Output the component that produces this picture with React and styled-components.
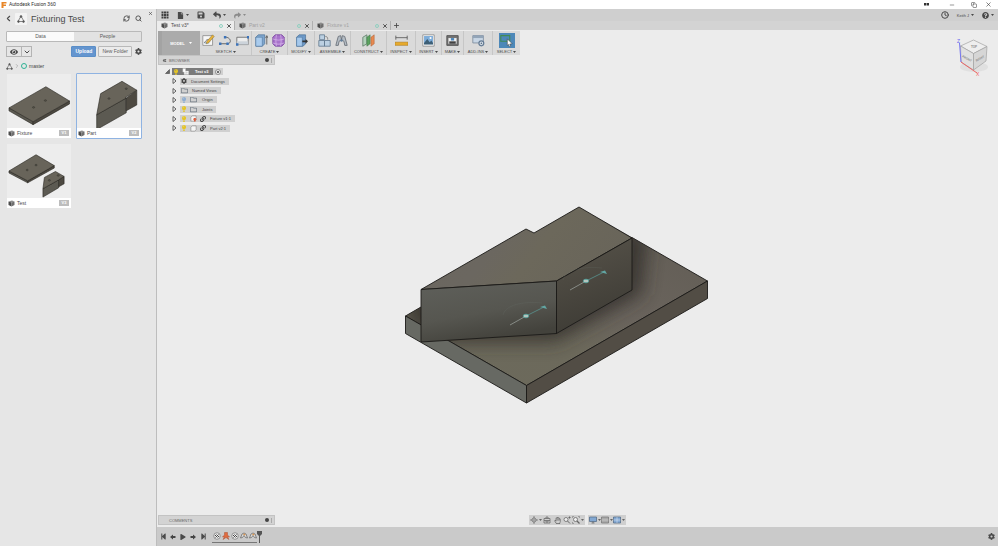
import React, { useState } from 'react';
import styled, { createGlobalStyle } from 'styled-components';
import { FaSave, FaFile, FaReply, FaShare, FaQuestionCircle, FaCog, FaEye, FaLink, FaLightbulb, FaRegFolder, FaRegHandPaper, FaStepBackward, FaStepForward, FaPlay } from 'react-icons/fa';
import { ChevronLeft, ChevronDown, ChevronRight, RefreshCw, Search, X, Plus, Minus, Copy, Clock, ChevronsLeft } from 'lucide-react';

const GlobalStyle = createGlobalStyle`
    *
    {
        box-sizing: border-box;
    }
    body
    {
        margin: 0;
        overflow: hidden;
        color: #4a4a4a;
        font-family: "Liberation Sans", Arial, sans-serif;
        font-size: 5px;
        line-height: 7px;
    }
    button
    {
        display: flex;
        align-items: center;
        justify-content: center;
        margin: 0;
        padding: 0;
        border: 0;
        background: none;
        color: inherit;
        font: inherit;
        white-space: nowrap;
    }
    svg
    {
        display: block;
        flex-shrink: 0;
    }
`;

const Window = styled.div`
    display: flex;
    flex-direction: column;
    height: 100vh;
    background: #ececec;
`;

const TitleBar = styled.header`
    display: flex;
    align-items: center;
    height: 9px;
    padding: 0 6px 0 1px;
    gap: 2px;
    background: #fff;
    color: #333;
    font-family: Roboto, sans-serif;
`;

const TitleText = styled.div`
    flex-grow: 1;
`;

const WindowButton = styled.button`
    width: ${({ $wide }) => $wide ? 24 : 16}px;
    height: 8px;
    &:last-child
    {
        width: 8px;
    }
`;

const Body = styled.div`
    display: flex;
    flex-grow: 1;
    min-height: 0;
`;

/* data panel */

const Panel = styled.aside`
    position: relative;
    flex-shrink: 0;
    width: 157px;
    padding: 3px 14px 0 6px;
    background: #e6e6e6;
    border-right: 1px solid #bdbdbd;
`;

const PanelClose = styled.button`
    position: absolute;
    top: 2px;
    right: 3px;
    width: 5px;
    height: 5px;
`;

const PanelHeader = styled.div`
    display: flex;
    align-items: center;
    height: 13px;
    margin-right: -2px;
`;

const ProjectLogo = styled.div`
    display: flex;
    align-items: center;
    justify-content: center;
    width: 12px;
    height: 12px;
    margin: 0 4px;
    background: #f3f3f3;
    border-radius: 1px;
`;

const ProjectName = styled.h1`
    flex-grow: 1;
    margin: 0;
    font-size: 9px;
    font-weight: normal;
    line-height: 12px;
`;

const HeaderButton = styled.button`
    width: ${({ $wide }) => $wide ? 12 : 8}px;
    height: 10px;
    &:first-child
    {
        width: 5px;
    }
`;

const Switcher = styled.div`
    display: flex;
    height: 11px;
    margin-top: 6px;
    border: 1px solid #b9b9b9;
    border-radius: 1px;
`;

const SwitchButton = styled.button`
    flex: 1;
    background: ${({ $active }) => $active ? `#fafafa` : `#e2e2e2`};
    color: #5c5c5c;
`;

const Actions = styled.div`
    display: flex;
    align-items: center;
    height: 11px;
    margin-top: 4px;
`;

const ViewButton = styled.button`
    width: ${({ $small }) => $small ? 11 : 16}px;
    height: 11px;
    border: 1px solid #b4b4b4;
    margin-right: ${({ $small }) => $small ? `auto` : `-1px`};
`;

const ActionButton = styled.button`
    height: 11px;
    padding: 0 3px;
    margin-right: 2px;
    border: 1px solid ${({ $primary }) => $primary ? `#5a8ec8` : `#b9b9b9`};
    border-radius: 1px;
    background: ${({ $primary }) => $primary ? `#6495cf` : `#ebebeb`};
    color: ${({ $primary }) => $primary ? `#fff` : `#5c5c5c`};
    font-weight: ${({ $primary }) => $primary ? `bold` : `normal`};
`;

const Crumbs = styled.nav`
    display: flex;
    align-items: center;
    gap: 1px;
    height: 8px;
    margin-top: 5px;
    margin-bottom: 3px;
    a
    {
        color: #444;
        text-decoration: none;
    }
`;

const Ring = styled.span`
    width: 6px;
    height: 6px;
    margin-right: 1px;
    border: 1px solid #2fb295;
    border-radius: 50%;
`;

const Cards = styled.div`
    display: grid;
    grid-template-columns: 1fr 1fr;
    gap: 4px;
`;

const Card = styled.div`
    border: 1px solid ${({ $selected }) => $selected ? `#8fb3e2` : `transparent`};
    border-radius: 1px;
    background: #ededed;
    background-clip: padding-box;
`;

const CardImage = styled.svg`
    width: 100%;
    height: 54px;
`;

const CardFooter = styled.div`
    display: flex;
    align-items: center;
    height: 10px;
    padding: 0 2px 0 1px;
    gap: 2px;
    background: #fff;
`;

const CardName = styled.div`
    flex-grow: 1;
`;

const Version = styled.span`
    width: 10px;
    height: 6px;
    background: #bdbdbd;
    color: #fff;
    font-size: 4px;
    font-weight: bold;
    line-height: 6px;
    text-align: center;
`;

/* work space */

const Workspace = styled.main`
    display: flex;
    flex-direction: column;
    flex-grow: 1;
    min-width: 0;
`;

const QuickBar = styled.div`
    display: flex;
    align-items: center;
    height: 12px;
    padding: 0 4px;
    gap: 8px;
    background: #cfcfcf;
    font-size: 4px;
`;

const QuickButton = styled.button`
    gap: 2px;
    height: 10px;
    min-width: 8px;
    opacity: ${({ $dim }) => $dim ? .5 : 1};
`;

const Spacer = styled.div`
    flex-grow: 1;
`;

const DocTabs = styled.div`
    display: flex;
    height: 9px;
    background: #d3d3d3;
`;

const DocTab = styled.div`
    display: flex;
    align-items: center;
    width: 78px;
    padding: 0 2px 0 4px;
    border-right: 1px solid #b0b0b0;
    background: ${({ $active }) => $active ? `#ececec` : `#d3d3d3`};
    color: ${({ $active }) => $active ? `#4a4a4a` : `#a2a2a2`};
`;

const DocName = styled.button`
    flex-grow: 1;
    justify-content: flex-start;
    gap: 3px;
`;

const Dot = styled.span`
    width: 4px;
    height: 4px;
    margin-right: 3px;
    border: 1px solid #8fd0c0;
    border-radius: 50%;
`;

const AddTab = styled.button`
    width: 10px;
`;

const Canvas = styled.section`
    position: relative;
    display: flex;
    flex-direction: column;
    flex-grow: 1;
    min-height: 0;
    padding: 1px 1px 2px;
    background: #ececec;
    > *
    {
        z-index: 1;
    }
`;

const ModelView = styled.svg`
    position: absolute;
    inset: 0;
    width: 100%;
    height: 100%;
    z-index: 0;
`;

const ViewCube = styled.svg`
    position: absolute;
    top: 4px;
    right: 4px;
    width: 44px;
    height: 46px;
`;

const Toolbar = styled.div`
    display: flex;
    align-self: flex-start;
    height: 24px;
    background: #dadada;
    font-size: 4px;
    line-height: 5px;
`;

const ModelButton = styled.button`
    width: 42px;
    gap: 4px;
    border-left: 4px solid #a3a3a3;
    background: #ababab;
    color: #fff;
    font-weight: bold;
`;

const ToolGroup = styled.div`
    display: flex;
    flex-direction: column;
    align-items: center;
    width: ${({ $width }) => $width}px;
    padding-top: 2px;
    border-right: 1px solid #c6c6c6;
    &:last-child
    {
        border-right: 0;
    }
`;

const ToolIcons = styled.div`
    display: flex;
`;

const ToolButton = styled.button`
    width: ${({ $active }) => $active ? 16 : 17}px;
    height: 15px;
    background: ${({ $active }) => $active ? `#4d88b8` : `none`};
`;

const ToolLabel = styled.button`
    gap: 1px;
    height: 5px;
    margin-top: 1px;
`;

const Bar = styled.div`
    display: flex;
    align-items: center;
    width: 117px;
    height: 10px;
    padding: 0 2px 0 3px;
    border: 1px solid #c3c3c3;
    background: #d3d3d3;
    color: #666;
    font-size: 4px;
`;

const BarTitle = styled.div`
    flex-grow: 1;
    padding-left: ${({ $indent }) => $indent ? 7 : 2}px;
`;

const BarDot = styled.span`
    width: 4px;
    height: 4px;
    margin-right: 2px;
    border-radius: 50%;
    background: #444;
`;

const Grip = styled.span`
    width: 1px;
    height: 5px;
    background: #aaa;
`;

const Tree = styled.ul`
    display: grid;
    grid-auto-rows: 1fr;
    height: 66px;
    margin: 2px 0 0;
    padding: 0;
    list-style: none;
    font-size: 4px;
`;

const TreeRow = styled.li`
    display: flex;
    align-items: center;
    padding-left: ${({ $root }) => $root ? 6 : 13}px;
`;

const Expander = styled.button`
    width: 6px;
    height: 7px;
    margin-right: ${({ $root }) => $root ? 2 : 3}px;
`;

const TreeItem = styled.div`
    display: flex;
    align-items: center;
    height: 7px;
    padding: 0 4px 0 1px;
    gap: 3px;
    background: ${({ $root }) => $root ? `#7b7b7b` : `#d0d0d0`};
    color: ${({ $root }) => $root ? `#fff` : `#444`};
    font-weight: ${({ $root }) => $root ? `bold` : `normal`};
`;

const TreeName = styled.span`
    padding-left: ${({ $pad }) => $pad}px;
`;

const Activate = styled.button`
    width: 10px;
    height: 7px;
    background: #d0d0d0;
`;

const CanvasFooter = styled.div`
    display: grid;
    grid-template-columns: 1fr auto 1fr;
`;

const NavBar = styled.div`
    display: flex;
    gap: 3px;
`;

const NavGroup = styled.div`
    display: flex;
    align-items: center;
    height: 10px;
    padding: 0 1px;
    background: #cfcfcf;
`;

const NavButton = styled.button`
    gap: 1px;
    width: ${({ $menu }) => $menu ? 12 : 10}px;
    height: 9px;
    color: #666;
`;

const Timeline = styled.footer`
    display: flex;
    align-items: center;
    height: 19px;
    padding: 0 3px 0 1px;
    background: #cacaca;
`;

const TimeButton = styled.button`
    width: 10px;
    height: 10px;
`;

const Features = styled.div`
    display: flex;
    align-items: flex-start;
    padding-left: 4px;
`;

const FeatureList = styled.div`
    display: flex;
    height: 12px;
    border-bottom: 1px solid #777;
`;

const FeatureButton = styled.button`
    width: 9px;
    height: 10px;
`;

const Caret = () => <svg width={3} height={2} viewBox="0 0 6 4"><path d="M0 0h6L3 4z" fill="currentColor" /></svg>;

const CubeIcon = () => (
    <svg width={7} height={7} viewBox="0 0 14 14">
        <path d="m1 3 7-2 5 2-6 2z" fill="#8c8c8c" />
        <path d="m1 3 6 2v8l-6-3z" fill="#4c4c4c" />
        <path d="m7 5 6-2v7l-6 3z" fill="#6e6e6e" />
    </svg>
);

const ProjectIcon = ({ size }) => (
    <svg width={size} height={size} viewBox="0 0 16 16" fill="none" stroke="#555" strokeWidth="1.400">
        <path d="M7 4 3 11M9 4l4 7M5 13h6" />
        <circle cx="8" cy="3" r="1.800" fill="#555" /><circle cx="3" cy="13" r="1.800" fill="#555" /><circle cx="13" cy="13" r="1.800" fill="#555" />
    </svg>
);

const art = {
    sketch: <>
        <path d="M1 2h12v12H1z" fill="#f7f7f7" stroke="#8c8c8c" />
        <path d="M3 10h6v2H3z" fill="#b6cde2" /><path d="M3 11c3-5 4-5 7-2" stroke="#555" fill="none" />
        <path d="m6 9 7-8 2 2-7 8-3 1z" fill="#e7b23a" stroke="#7d6a3a" strokeWidth=".6" />
    </>,
    line: <>
        <path d="M1 12h9c6 0 5-8-2-8" fill="none" stroke="#666" strokeWidth="1.2" />
        <path d="M0 10.500h3v3H0zM9 10.500h3v3H9zM6 2.500h3v3H6z" fill="#3c73b9" />
    </>,
    rect: <>
        <path d="M1 4h14v9H1z" fill="#ededed" stroke="#666" />
        <path d="M1 9h14v4H1z" fill="#ccd3da" /><path d="M13.500 2.500h2.500v3h-2.500zM0 11.500h3v3H0z" fill="#3c73b9" />
    </>,
    extrude: <>
        <path d="m1 4 3-3h8v11l-3 3H1z" fill="#7ea5cd" stroke="#466c93" strokeWidth=".8" />
        <path d="M1 4h8v11H1z" fill="#a9cbed" stroke="#466c93" strokeWidth=".6" />
        <path d="M14.500 13V3m-1.500 2 1.500-3L16 5" stroke="#555" fill="none" />
    </>,
    form: <>
        <path d="M4 1h8l3 3v8l-3 3H4l-3-3V4z" fill="#a873cb" stroke="#75429c" />
        <path d="M1 6c5 2 9 2 14 0M1 11c5 2 9 2 14 0M5.500 1c-1 5-1 9 0 14M10.500 1c1 5 1 9 0 14" stroke="#e3c9f3" strokeWidth=".7" fill="none" />
    </>,
    modify: <>
        <path d="m2 4 3-3h8v11l-3 3H2z" fill="#6d99c8" stroke="#466c93" strokeWidth=".8" />
        <path d="M2 4h7v11H2z" fill="#a4c8ec" stroke="#466c93" strokeWidth=".6" />
        <path d="M9 8h4V6l3 3-3 3v-2H9z" fill="#333" />
    </>,
    joint: <>
        <path d="M2 1h6v6H2zM1 8h7v7H1zM8 8h7v7H8z" fill="#bcd0e2" stroke="#61798f" />
        <path d="M12 7c0-3-1-4-3-4" fill="none" stroke="#777" />
    </>,
    motion: <>
        <path d="m1 14 3-11 3-1 1 5-3 2-1 5zM15 14 12 3 9 2 8 7l3 2 1 5z" fill="#b4bcc4" stroke="#626a72" />
        <circle cx="8" cy="8" r="1.500" fill="#617e9a" />
    </>,
    plane: <>
        <path d="M1 4 6 1v11l-5 3z" fill="#b4d2bd" stroke="#5f7d69" />
        <path d="M6 4 10 1v11l-4 3z" fill="#5ba35f" stroke="#3d6d42" strokeWidth=".6" />
        <path d="m11 4 4-3v11l-4 3z" fill="#e78950" stroke="#a75b30" strokeWidth=".6" />
    </>,
    inspect: <>
        <path d="M1 4.500h14M1 2v5M15 2v5" stroke="#555" fill="none" />
        <path d="M0 10h16v4H0z" fill="#e7aa2c" stroke="#a2731b" strokeWidth=".6" />
    </>,
    insert: <>
        <path d="M1 1h14v14H1z" fill="#f6f6f6" stroke="#8c8c8c" />
        <path d="M2.500 2.500h11v10h-11z" fill="#7eadd9" />
        <path d="m2.500 11 4-5 3 4 2-2 2 3v2h-11z" fill="#3d5f76" /><circle cx="10.500" cy="5" r="1.300" fill="#fff" />
    </>,
    make: <>
        <path d="M1 2h14v12H1z" fill="#747474" stroke="#4a4a4a" /><path d="M3 5h10v7H3z" fill="#f1f1f1" />
        <path d="M4 9h8v3H4z" fill="#424242" /><path d="M6 5h4v3H6z" fill="#4a86bc" />
    </>,
    addins: <>
        <path d="M1 2h13v9H1z" fill="#c8d6e5" stroke="#79899a" /><path d="M1 2h13v3H1z" fill="#93a5b8" />
        <circle cx="11.500" cy="11.500" r="3" fill="#dbe2ea" stroke="#647b94" strokeWidth="1.500" /><circle cx="11.500" cy="11.500" r="1" fill="#526980" />
    </>,
    select: <>
        <path d="M1 2h11v7H1z" fill="none" stroke="#418a54" strokeWidth="1.300" />
        <path d="m9 6 6 6-3 .3 1 2.700-1.500.6-1-2.800L9 14z" fill="#fff" stroke="#333" strokeWidth=".6" />
    </>,
    orbit: <>
        <circle cx="8" cy="8" r="4" fill="none" stroke="currentColor" strokeWidth="1.500" />
        <path d="M8 0 6 3h4zM8 16l-2-3h4zM0 8l3-2v4zM16 8l-3-2v4z" fill="currentColor" /><circle cx="8" cy="8" r="1.500" fill="currentColor" />
    </>,
    look: <path d="M2 5h12v9H2zM2 9h12M6 5V2h4v3M6 9v3h4V9" fill="none" stroke="currentColor" strokeWidth="1.500" />,
    zoom: <>
        <circle cx="6" cy="7" r="4" fill="#eee" stroke="currentColor" strokeWidth="1.500" />
        <path d="m9 10 5 5M11 3h4M13 1v4" stroke="currentColor" strokeWidth="2" />
    </>,
    fit: <>
        <path d="M1 4V1h3M12 1h3v3M1 12v3h3" fill="none" stroke="currentColor" />
        <circle cx="7" cy="7" r="4" fill="#eee" stroke="currentColor" strokeWidth="1.500" /><path d="m10 10 5 5" stroke="currentColor" strokeWidth="2.500" />
    </>,
    display: <><path d="M1 2h14v9H1z" fill="#83a8d2" stroke="#536b87" strokeWidth="1.500" /><path d="M5 14h6M8 11v3" stroke="#606060" strokeWidth="1.500" /></>,
    grid: <><path d="M1 2h14v12H1z" fill="#aaa" stroke="#777" strokeWidth="1.500" /><path d="M1 8h14" stroke="#ddd" /></>,
    views: <><path d="M1 2h14v12H1z" fill="#83a8d2" stroke="#536b87" strokeWidth="1.500" /><path d="M8 2v12M1 8h14" stroke="#e5eef8" /></>,
    apps: <path d="M1 1h4v4H1zM6 1h4v4H6zM11 1h4v4h-4zM1 6h4v4H1zM6 6h4v4H6zM11 6h4v4h-4zM1 11h4v4H1zM6 11h4v4H6zM11 11h4v4h-4z" fill="#3f3f3f" />,
    link: <><circle cx="8" cy="8" r="6.500" fill="#eee" stroke="#777" strokeWidth="1.500" /><path d="m5 11 6-6M4 8l3-3M9 11l3-3" stroke="#444" strokeWidth="2" /></>,
    pin: <path d="M5 1h6v5l4 4h-4l3 5-6-4-6 4 3-5H1l4-4z" fill="#e06b3f" stroke="#a84f30" />,
    fold: <><path d="m1 12 3-8 4-2 4 2 3 8-4-1-3-4-3 4z" fill="#ddd" stroke="#666" strokeWidth="1.500" /><path d="m6 4 4-1 1 3-3 1z" fill="#d99653" /></>,
    component: <path d="m2 5 3-3h9v9l-3 3H2z" fill="#f5f5f5" stroke="#777" strokeWidth="1.200" />,
    fixture: <><path d="m2 5 3-3h9v9l-3 3H2z" fill="#f5f5f5" stroke="#777" strokeWidth="1.200" /><path d="M9 7h4l2 4h-2v4H9v-4H7z" fill="#dc5b3b" /></>,
    root: <><path d="M2 1h6v6h7v8H5V9H2z" fill="#fff" stroke="#ccc" /><path d="M9 8v6M9 11h5" stroke="#999" /></>,
};

const Art = ({ name, size = 12 }) => <svg width={size} height={size} viewBox="0 0 16 16">{art[name]}</svg>;

const Faces = ({ top, left, right, holes = [] }) => (
    <g stroke="#25231f" strokeWidth=".6" strokeLinejoin="round">
        <polygon points={left} fill="#5c5a52" />
        <polygon points={right} fill="#4d4941" />
        <polygon points={top} fill="#68645a" />
        {holes.map(([ x, y ]) => <ellipse key={x} cx={x} cy={y} rx="1.100" ry=".8" fill="#5a574e" strokeWidth=".4" />)}
    </g>
);

const cards = [
    {
        name: `Fixture`, version: `V1`, view: `6.500 74 65 54`,
        shapes: [ {
            top: `8.500,108 46,86.500 70,101 33,122`, left: `8.500,108 33,122 33,125 8.500,111`,
            right: `33,122 70,101 70,104 33,125`, holes: [ [ 45.5, 100.5 ], [ 33.5, 107.5 ] ],
        } ],
    },
    {
        name: `Part`, version: `V2`, view: `77 74 65 54`,
        shapes: [ {
            top: `101,93.500 122.700,81 137.700,90 126,97.500 127,98 97,115`, left: `97,115 127,98 127,113 97,130`,
            right: `127,98 137.700,90 137.700,105 127,111`, holes: [ [ 127, 88.5 ], [ 109.5, 98.5 ] ],
        } ],
    },
    {
        name: `Test`, version: `V3`, view: `6.500 144 65 54`,
        shapes: [ {
            top: `8.500,171 36,154.500 54.500,165.500 27.500,181`, left: `8.500,171 27.500,181 27.500,183 8.500,173`,
            right: `27.500,181 54.500,165.500 54.500,168 27.500,183`, holes: [ [ 36, 165 ], [ 27, 170 ] ],
        }, {
            top: `44.500,177.500 55.700,171.500 64.500,176.500 59,180 43,189`, left: `43,189 59,180 59,188 43,197.500`,
            right: `59,180 64.500,176.500 64.500,184 59,187`, holes: [ [ 58.5, 175.5 ], [ 49.5, 180.5 ] ],
        } ],
    },
];

const docs = [ `Test v3*`, `Part v2`, `Fixture v1` ];

const tools = [
    { label: `SKETCH`, width: 52, icons: [ `sketch`, `line`, `rect` ] },
    { label: `CREATE`, width: 36, icons: [ `extrude`, `form` ] },
    { label: `MODIFY`, width: 27, icons: [ `modify` ] },
    { label: `ASSEMBLE`, width: 36, icons: [ `joint`, `motion` ] },
    { label: `CONSTRUCT`, width: 36, icons: [ `plane` ] },
    { label: `INSPECT`, width: 29, icons: [ `inspect` ] },
    { label: `INSERT`, width: 26, icons: [ `insert` ] },
    { label: `MAKE`, width: 22, icons: [ `make` ] },
    { label: `ADD-INS`, width: 29, icons: [ `addins` ] },
    { label: `SELECT`, width: 27, icons: [ `select` ] },
];

const bulb = <FaLightbulb size={6} color="#e5c526" />;
const folder = <FaRegFolder size={7} color="#6c7680" />;
const chain = <FaLink size={6} />;
const tree = [
    { name: `Document Settings`, icons: [ <FaCog size={6} /> ] },
    { name: `Named Views`, icons: [ folder ] },
    { name: `Origin`, icons: [ <FaLightbulb size={6} color="#8faed2" />, folder ], pad: 2 },
    { name: `Joints`, icons: [ bulb, folder ], pad: 2 },
    { name: `Fixture v1:1`, icons: [ bulb, <Art name="fixture" size={7} />, chain ] },
    { name: `Part v2:1`, icons: [ bulb, <Art name="component" size={7} />, chain ] },
];

const JointMark = ({ x, y }) => (
    <g transform={`translate(${x} ${y})`} fill="none">
        <path d="M-23-1c2-10 20-14 39-12" stroke="#717b76" strokeWidth=".5" opacity=".35" />
        <path d="M-16 9 0 0" stroke="#969c97" strokeWidth=".8" />
        <path d="M0 0 18-9" stroke="#58938f" strokeWidth=".8" />
        <path d="m14-9 5-1.500 2 3.500z" fill="#62a5a2" />
        <ellipse rx="2.800" ry="1.800" fill="#b5c5bf" stroke="#52a39d" strokeWidth=".8" />
    </g>
);

const Model = () => (
    <ModelView viewBox="157 30 841 497" aria-hidden="true">
        <defs>
            <linearGradient id="front" x1="0" y1="0" x2=".4" y2="1">
                <stop offset="0" stopColor="#5f605b" /><stop offset=".6" stopColor="#565650" /><stop offset="1" stopColor="#43423c" />
            </linearGradient>
            <linearGradient id="side" x1=".3" y1="0" x2=".6" y2="1">
                <stop offset="0" stopColor="#565249" /><stop offset="1" stopColor="#3c3a34" />
            </linearGradient>
            <linearGradient id="top" x1="0" y1="0" x2="1" y2=".3">
                <stop offset="0" stopColor="#6b665f" /><stop offset=".45" stopColor="#6b6760" /><stop offset=".65" stopColor="#6c685b" /><stop offset="1" stopColor="#69655a" />
            </linearGradient>
            <linearGradient id="plate" x1="0" y1="1" x2="1" y2="0">
                <stop offset="0" stopColor="#6c6a5c" /><stop offset=".4" stopColor="#6c695b" /><stop offset=".6" stopColor="#6a645d" /><stop offset="1" stopColor="#625d55" />
            </linearGradient>
            <clipPath id="plateTop"><path d="M405.500 316 526.500 385.500 707.500 281 586.500 211z" /></clipPath>
            <filter id="soft" x="-20%" y="-20%" width="140%" height="140%"><feGaussianBlur stdDeviation="9" /></filter>
        </defs>
        <g stroke="#1b1a17" strokeWidth=".9" strokeLinejoin="round">
            <path d="M405.500 316 526.500 385.500 707.500 281 632 237.500 421 307z" fill="url(#plate)" />
            <g clipPath="url(#plateTop)" stroke="none">
                <path d="M400 300 421 342 556 342 642 294 649 230 560 230z" fill="#302e29" filter="url(#soft)" opacity=".8" />
            </g>
            <path d="M405.500 316 526.500 385.500V403L405.500 333.500z" fill="#676963" />
            <path d="M526.500 385.500 707.500 281v17.500L526.500 403z" fill="#524d45" />
            <path d="M421 289.500 526 229l8 4 45-26 53 31-75.500 43z" fill="url(#top)" />
            <path d="m421 289.500 135.500-8.500v52.500L421 342z" fill="url(#front)" />
            <path d="M556.500 281 632 238v52l-75.500 43.500z" fill="url(#side)" />
        </g>
        <JointMark x={526} y={316} />
        <JointMark x={586} y={281} />
    </ModelView>
);

const Cube = () => (
    <ViewCube viewBox="950 34 44 46" fontFamily="Liberation Sans">
        <ellipse cx="974" cy="67" rx="14" ry="5" fill="#e0e0e0" />
        <g stroke="#a2a2a2" strokeWidth=".7" strokeLinejoin="round">
            <path d="m960.500 46 13-6L987 46.500l-13.500 7z" fill="#eee" />
            <path d="m960.500 46 13 7.500V70L961 62z" fill="#e0e0e0" />
            <path d="M973.500 53.500 987 46.500 986 61l-12.500 9z" fill="#d6d6d6" />
        </g>
        <path d="m959.500 43 1.500 19" stroke="#7676f0" />
        <path d="m961 62 16 11" stroke="#ee6666" />
        <g fill="#898989" textAnchor="middle" fontWeight="bold" fontSize="3">
            <text x="974" y="48">TOP</text>
            <text transform="translate(966.500 59.500) rotate(28)">FRONT</text>
            <text transform="translate(980.500 59.500) rotate(-30)">RIGHT</text>
        </g>
        <text x="957" y="43" fill="#6969ed" fontSize="5">Z</text>
        <text x="976" y="76" fill="#ee6060" fontSize="5">X</text>
    </ViewCube>
);

const App = () =>
{
    const [ tab, setTab ] = useState( `Data` );
    const [ doc, setDoc ] = useState( docs[0] );
    const [ tool, setTool ] = useState( `select` );

    return (
        <Window>
            <GlobalStyle />
            <TitleBar>
                <svg width={6} height={6} viewBox="0 0 12 12"><path d="M1 0h10v3H5v2h5v3H5v4H1z" fill="#e88628" /></svg>
                <TitleText>Autodesk Fusion 360</TitleText>
                <WindowButton $wide aria-label="Devices"><svg width={5} height={3} viewBox="0 0 10 6"><path d="M0 0h4v5H0zM5 0h5v5H5z" fill="#333" /></svg></WindowButton>
                <WindowButton $wide aria-label="Minimize"><Minus size={6} /></WindowButton>
                <WindowButton aria-label="Restore"><Copy size={6} /></WindowButton>
                <WindowButton aria-label="Close"><X size={7} /></WindowButton>
            </TitleBar>
            <Body>
                <Panel>
                    <PanelClose aria-label="Close panel"><X size={5} strokeWidth={3} /></PanelClose>
                    <PanelHeader>
                        <HeaderButton aria-label="Back"><ChevronLeft size={9} strokeWidth={3} /></HeaderButton>
                        <ProjectLogo><ProjectIcon size={8} /></ProjectLogo>
                        <ProjectName>Fixturing Test</ProjectName>
                        <HeaderButton $wide aria-label="Refresh"><RefreshCw size={7} strokeWidth={3} /></HeaderButton>
                        <HeaderButton $wide aria-label="Search"><Search size={7} strokeWidth={3} /></HeaderButton>
                    </PanelHeader>
                    <Switcher>
                        {[ `Data`, `People` ].map(name => (
                            <SwitchButton key={name} $active={tab === name} onClick={() => setTab( name )}>{name}</SwitchButton>
                        ))}
                    </Switcher>
                    <Actions>
                        <ViewButton aria-label="View"><FaEye size={8} /></ViewButton>
                        <ViewButton $small aria-label="View options"><ChevronDown size={8} strokeWidth={3} /></ViewButton>
                        <ActionButton $primary>Upload</ActionButton>
                        <ActionButton>New Folder</ActionButton>
                        <HeaderButton aria-label="Settings"><FaCog size={7} /></HeaderButton>
                    </Actions>
                    <Crumbs>
                        <ProjectIcon size={7} />
                        <ChevronRight size={6} color="#888" />
                        <Ring />
                        <a href="#master">master</a>
                    </Crumbs>
                    <Cards>
                        {cards.map(card => (
                            <Card key={card.name} $selected={card.name === `Part`}>
                                <CardImage viewBox={card.view}>
                                    {card.shapes.map(shape => <Faces key={shape.top} {...shape} />)}
                                </CardImage>
                                <CardFooter>
                                    <CubeIcon />
                                    <CardName>{card.name}</CardName>
                                    <Version>{card.version}</Version>
                                </CardFooter>
                            </Card>
                        ))}
                    </Cards>
                </Panel>
                <Workspace>
                    <QuickBar>
                        <QuickButton aria-label="Data panel"><Art name="apps" size={8} /></QuickButton>
                        <QuickButton aria-label="File"><FaFile size={7} /><Caret /></QuickButton>
                        <QuickButton aria-label="Save"><FaSave size={8} /></QuickButton>
                        <QuickButton aria-label="Undo"><FaReply size={8} /><Caret /></QuickButton>
                        <QuickButton $dim aria-label="Redo"><FaShare size={7} /><Caret /></QuickButton>
                        <Spacer />
                        <QuickButton aria-label="Job status"><Clock size={8} strokeWidth={3} /></QuickButton>
                        <QuickButton>Keith J <Caret /></QuickButton>
                        <QuickButton aria-label="Help"><FaQuestionCircle size={7} /><Caret /></QuickButton>
                    </QuickBar>
                    <DocTabs>
                        {docs.map(name => (
                            <DocTab key={name} $active={doc === name}>
                                <DocName onClick={() => setDoc( name )}><CubeIcon />{name}</DocName>
                                <Dot />
                                <button aria-label={`Close ${name}`}><X size={6} strokeWidth={4} color="#555" /></button>
                            </DocTab>
                        ))}
                        <AddTab aria-label="New design"><Plus size={7} strokeWidth={3} /></AddTab>
                    </DocTabs>
                    <Canvas>
                        <Model />
                        <Cube />
                        <Toolbar>
                            <ModelButton>MODEL <Caret /></ModelButton>
                            {tools.map(group => (
                                <ToolGroup key={group.label} $width={group.width}>
                                    <ToolIcons>
                                        {group.icons.map(name => (
                                            <ToolButton key={name} aria-label={name} $active={tool === name} onClick={() => setTool( name )}>
                                                <Art name={name} size={13} />
                                            </ToolButton>
                                        ))}
                                    </ToolIcons>
                                    <ToolLabel>{group.label}<Caret /></ToolLabel>
                                </ToolGroup>
                            ))}
                        </Toolbar>
                        <Bar>
                            <ChevronsLeft size={5} strokeWidth={5} />
                            <BarTitle>BROWSER</BarTitle>
                            <BarDot /><Grip />
                        </Bar>
                        <Tree>
                            <TreeRow $root>
                                <Expander $root aria-label="Collapse"><svg width={5} height={5} viewBox="0 0 10 10"><path d="M9 1v8H1z" fill="#666" stroke="#333" /></svg></Expander>
                                <TreeItem $root>{bulb}<Art name="root" size={7} /><TreeName $pad={3}>Test v3</TreeName></TreeItem>
                                <Activate aria-label="Activate"><svg width={6} height={6} viewBox="0 0 12 12"><circle cx="6" cy="6" r="5" fill="#eee" stroke="#444" /><circle cx="6" cy="6" r="2" fill="#444" /></svg></Activate>
                            </TreeRow>
                            {tree.map(item => (
                                <TreeRow key={item.name}>
                                    <Expander aria-label="Expand"><svg width={5} height={6} viewBox="0 0 10 12"><path d="m2 1 6 5-6 5z" fill="#f5f5f5" stroke="#333" strokeWidth="1.500" /></svg></Expander>
                                    <TreeItem>
                                        {item.icons.map((icon, i) => <React.Fragment key={i}>{icon}</React.Fragment>)}
                                        <TreeName $pad={item.pad || 1}>{item.name}</TreeName>
                                    </TreeItem>
                                </TreeRow>
                            ))}
                        </Tree>
                        <Spacer />
                        <CanvasFooter>
                            <Bar>
                                <BarTitle $indent>COMMENTS</BarTitle>
                                <BarDot /><Grip />
                            </Bar>
                            <NavBar>
                                <NavGroup>
                                    <NavButton $menu aria-label="Orbit"><Art name="orbit" size={8} /><Caret /></NavButton>
                                    <NavButton aria-label="Look at"><Art name="look" size={8} /></NavButton>
                                    <NavButton aria-label="Pan"><FaRegHandPaper size={7} /></NavButton>
                                    <NavButton aria-label="Zoom"><Art name="zoom" size={8} /></NavButton>
                                    <NavButton $menu aria-label="Fit"><Art name="fit" size={8} /><Caret /></NavButton>
                                </NavGroup>
                                <NavGroup>
                                    <NavButton $menu aria-label="Display settings"><Art name="display" size={8} /><Caret /></NavButton>
                                    <NavButton $menu aria-label="Grid"><Art name="grid" size={8} /><Caret /></NavButton>
                                    <NavButton $menu aria-label="Viewports"><Art name="views" size={8} /><Caret /></NavButton>
                                </NavGroup>
                            </NavBar>
                        </CanvasFooter>
                    </Canvas>
                    <Timeline>
                        <TimeButton aria-label="First"><FaStepBackward size={7} /></TimeButton>
                        <TimeButton aria-label="Previous"><svg width={6} height={6} viewBox="0 0 12 12"><path d="m6 1-6 5 6 5V8h5V4H6z" fill="#444" /></svg></TimeButton>
                        <TimeButton aria-label="Play"><FaPlay size={6} /></TimeButton>
                        <TimeButton aria-label="Next"><svg width={6} height={6} viewBox="0 0 12 12"><path d="m6 1 6 5-6 5V8H1V4h5z" fill="#444" /></svg></TimeButton>
                        <TimeButton aria-label="Last"><FaStepForward size={7} /></TimeButton>
                        <Features>
                            <FeatureList>
                                {[ `link`, `pin`, `link`, `fold`, `fold` ].map((name, i) => (
                                    <FeatureButton key={i} aria-label={`Feature ${i + 1}`}><Art name={name} size={8} /></FeatureButton>
                                ))}
                            </FeatureList>
                            <svg width={5} height={12} viewBox="0 0 5 12"><path d="M0 0h5v3L3 5v7H2V5L0 3z" fill="#555" /></svg>
                        </Features>
                        <Spacer />
                        <HeaderButton aria-label="Timeline settings"><FaCog size={7} /></HeaderButton>
                    </Timeline>
                </Workspace>
            </Body>
        </Window>
    );
};

export default App;
